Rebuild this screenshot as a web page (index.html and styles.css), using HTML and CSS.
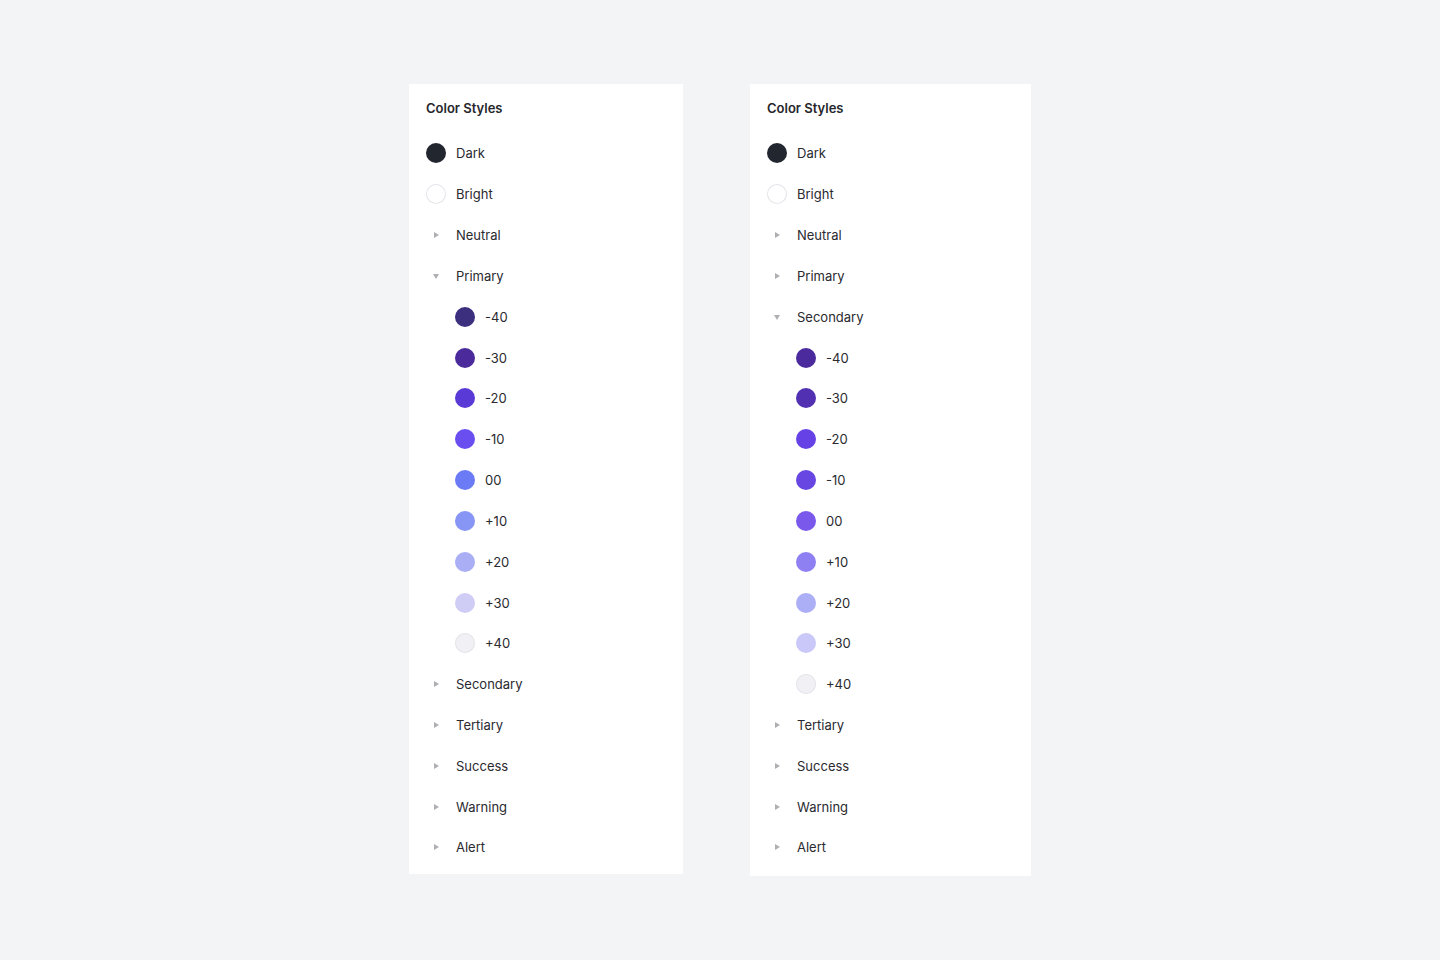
FILE: index.html
```html
<!DOCTYPE html>
<html lang="en">
<head>
<meta charset="utf-8">
<title>Color Styles</title>
<link rel="stylesheet" href="styles.css">
</head>
<body>
<main class="stage">
  <section class="panel panel-a">
    <h2 class="title">Color Styles</h2>
    <ul class="list">
      <li class="row"><span class="sw" style="background:#22262e"></span><span class="label">Dark</span></li>
      <li class="row"><span class="sw sw-light" style="background:#ffffff"></span><span class="label">Bright</span></li>
      <li class="row"><span class="caret caret-right"></span><span class="label">Neutral</span></li>
      <li class="row"><span class="caret caret-down"></span><span class="label">Primary</span></li>
      <li class="row child"><span class="sw" style="background:#3b2f7e"></span><span class="label">-40</span></li>
      <li class="row child"><span class="sw" style="background:#4b2a9c"></span><span class="label">-30</span></li>
      <li class="row child"><span class="sw" style="background:#5a3ad6"></span><span class="label">-20</span></li>
      <li class="row child"><span class="sw" style="background:#6a4ef0"></span><span class="label">-10</span></li>
      <li class="row child"><span class="sw" style="background:#6b7bf5"></span><span class="label">00</span></li>
      <li class="row child"><span class="sw" style="background:#8795f4"></span><span class="label">+10</span></li>
      <li class="row child"><span class="sw" style="background:#a9aef5"></span><span class="label">+20</span></li>
      <li class="row child"><span class="sw" style="background:#cfcdf6"></span><span class="label">+30</span></li>
      <li class="row child"><span class="sw sw-light" style="background:#f0f0f5"></span><span class="label">+40</span></li>
      <li class="row"><span class="caret caret-right"></span><span class="label">Secondary</span></li>
      <li class="row"><span class="caret caret-right"></span><span class="label">Tertiary</span></li>
      <li class="row"><span class="caret caret-right"></span><span class="label">Success</span></li>
      <li class="row"><span class="caret caret-right"></span><span class="label">Warning</span></li>
      <li class="row"><span class="caret caret-right"></span><span class="label">Alert</span></li>
    </ul>
  </section>
  <section class="panel panel-b">
    <h2 class="title">Color Styles</h2>
    <ul class="list">
      <li class="row"><span class="sw" style="background:#22262e"></span><span class="label">Dark</span></li>
      <li class="row"><span class="sw sw-light" style="background:#ffffff"></span><span class="label">Bright</span></li>
      <li class="row"><span class="caret caret-right"></span><span class="label">Neutral</span></li>
      <li class="row"><span class="caret caret-right"></span><span class="label">Primary</span></li>
      <li class="row"><span class="caret caret-down"></span><span class="label">Secondary</span></li>
      <li class="row child"><span class="sw" style="background:#4a2a9c"></span><span class="label">-40</span></li>
      <li class="row child"><span class="sw" style="background:#5230b2"></span><span class="label">-30</span></li>
      <li class="row child"><span class="sw" style="background:#6541e6"></span><span class="label">-20</span></li>
      <li class="row child"><span class="sw" style="background:#6846e2"></span><span class="label">-10</span></li>
      <li class="row child"><span class="sw" style="background:#7a58ec"></span><span class="label">00</span></li>
      <li class="row child"><span class="sw" style="background:#8e80f2"></span><span class="label">+10</span></li>
      <li class="row child"><span class="sw" style="background:#acaef6"></span><span class="label">+20</span></li>
      <li class="row child"><span class="sw" style="background:#cac8f8"></span><span class="label">+30</span></li>
      <li class="row child"><span class="sw sw-light" style="background:#f1f1f5"></span><span class="label">+40</span></li>
      <li class="row"><span class="caret caret-right"></span><span class="label">Tertiary</span></li>
      <li class="row"><span class="caret caret-right"></span><span class="label">Success</span></li>
      <li class="row"><span class="caret caret-right"></span><span class="label">Warning</span></li>
      <li class="row"><span class="caret caret-right"></span><span class="label">Alert</span></li>
    </ul>
  </section>
</main>
</body>
</html>
```

FILE: styles.css
```css
* { box-sizing: border-box; }

html, body {
  margin: 0;
  padding: 0;
  background: #f3f4f6;
  font-family: Inter, "Noto Sans", "Liberation Sans", sans-serif;
  color: #2a2a2f;
}

.stage {
  display: flex;
  align-items: flex-start;
  padding-top: 84px;
  padding-left: 409px;
  gap: 67px;
  min-height: 960px;
}

.panel {
  background: #ffffff;
  padding: 16px 0 6px 17px;
}

.panel-a { width: 274px; }
.panel-b { width: 281px; padding-bottom: 8px; }

.title {
  margin: 0 0 17px 0;
  font-size: 13px;
  line-height: 16px;
  font-weight: 600;
  color: #26262b;
}

.list {
  list-style: none;
  margin: 0;
  padding: 0;
}

.row {
  height: 40.83px;
  display: flex;
  align-items: center;
  gap: 10px;
  font-size: 13px;
  color: #2a2a2f;
}

.row.child { padding-left: 29px; }

.sw {
  width: 20px;
  height: 20px;
  border-radius: 50%;
  flex: none;
}

.sw-light {
  box-shadow: inset 0 0 0 1px #e4e4ea;
}

.caret {
  width: 20px;
  height: 20px;
  flex: none;
  position: relative;
}

.caret::before {
  content: "";
  position: absolute;
  width: 0;
  height: 0;
}

.caret-right::before {
  left: 8px;
  top: 7px;
  border-top: 3px solid transparent;
  border-bottom: 3px solid transparent;
  border-left: 5px solid #afafb3;
}

.caret-down::before {
  left: 7px;
  top: 8px;
  border-left: 3.5px solid transparent;
  border-right: 3.5px solid transparent;
  border-top: 5px solid #afafb3;
}

.label { line-height: 16px; }
```
